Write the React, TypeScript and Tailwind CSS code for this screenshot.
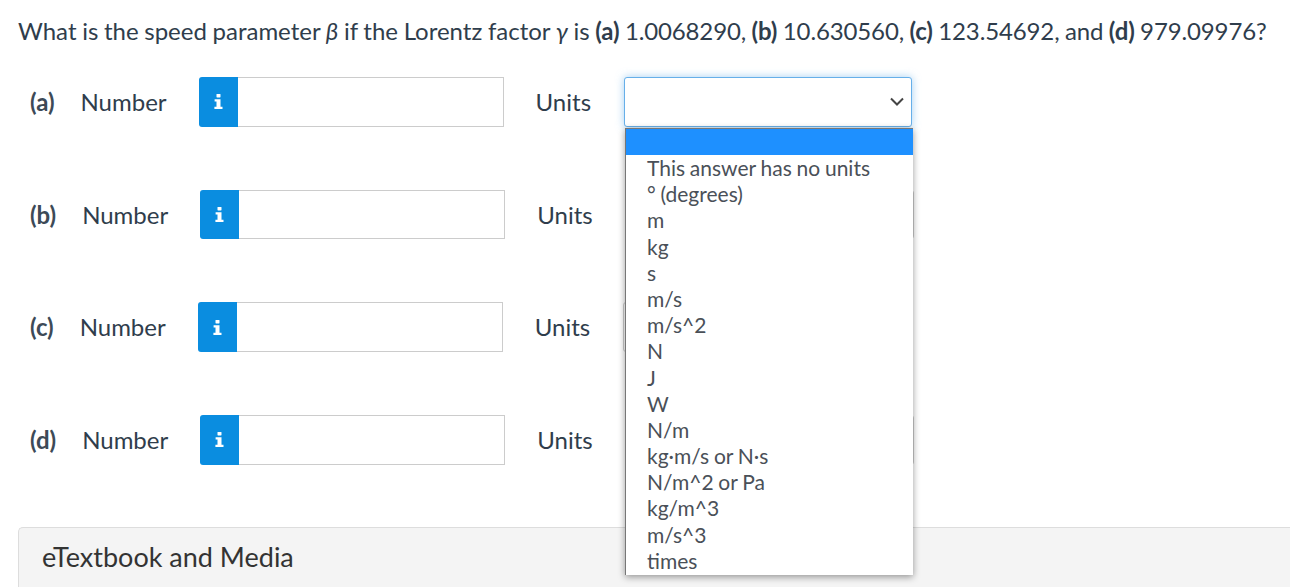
import React from 'react'

const rows = [
  { label: '(a)', focused: true },
  { label: '(b)', focused: false },
  { label: '(c)', focused: false },
  { label: '(d)', focused: false },
]

const units = [
  'This answer has no units',
  '° (degrees)',
  'm',
  'kg',
  's',
  'm/s',
  'm/s^2',
  'N',
  'J',
  'W',
  'N/m',
  'kg·m/s or N·s',
  'N/m^2 or Pa',
  'kg/m^3',
  'm/s^3',
  'times',
]

const InfoIcon = () => (
  <svg width="9" height="15" viewBox="0 0 9 15" fill="#fff">
    <rect x="2.5" y="0" width="4" height="3.4" rx="0.6" />
    <path d="M0.6 5.2h5.9v7.6h2v2.2H0.4v-2.2h2.1V7.4H0.6z" />
  </svg>
)

const Row = ({ label, focused }: { label: string; focused: boolean }) => (
  <div className="flex h-[49.7px] items-center mb-[63px]">
    <span className="font-bold text-[#3d4a57]">{label}</span>
    <span className="ml-[26px] text-[#2f3d4c]">Number</span>
    <div className="ml-[32px] flex h-full w-[305px]">
      <div className="flex w-[39px] shrink-0 items-center justify-center rounded-l-[3px] bg-[#0a8de0]">
        <InfoIcon />
      </div>
      <input className="min-w-0 flex-1 border border-l-0 border-[#cccccc] bg-white" />
    </div>
    <span className="ml-[32px] text-[#2f3d4c]">Units</span>
    <div
      className={
        focused
          ? 'ml-[33px] flex h-full w-[288px] items-center justify-end rounded-[3px] border border-[#66afe9] bg-white pr-[7px] shadow-[0_0_8px_rgba(102,175,233,0.6)]'
          : 'ml-[33px] flex h-full w-[288px] items-center justify-end rounded-[3px] border border-[#cccccc] bg-white pr-[7px]'
      }
    >
      <svg width="14" height="9" viewBox="0 0 14 9" fill="none" stroke="#444" strokeWidth="2">
        <path d="M1 1.5l6 6 6-6" />
      </svg>
    </div>
  </div>
)

export default function App() {
  return (
    <div className="relative h-[587px] w-[1290px] overflow-hidden bg-white font-['Lato','Open_Sans',sans-serif] text-[24px] text-[#2f3d4c]">
      <div className="pl-[18px] pt-[14px]">
        <p className="mb-[29px] h-[34px] whitespace-nowrap leading-[34px] text-[#2f3d4c] [word-spacing:-0.5px]">
          What is the speed parameter <i>β</i> if the Lorentz factor <i>γ</i> is{' '}
          <span className="tracking-[-0.13px]">
            <b>(a)</b> 1.0068290, <b>(b)</b> 10.630560, <b>(c)</b> 123.54692, and <b>(d)</b> 979.09976?
          </span>
        </p>
        <div className="pl-[12px]">
          {rows.map((r) => (
            <Row key={r.label} label={r.label} focused={r.focused} />
          ))}
        </div>
        <div className="-mt-[1px] h-[70px] rounded-tl-[5px] border border-r-0 border-[#dddddd] bg-[#f4f4f4] pl-[23px] pt-[11px] text-[27px] leading-[36px] text-[#333333]">
          eTextbook and Media
        </div>
      </div>

      {/* open select menu */}
      <div className="absolute left-[625px] top-[128px] h-[447px] w-[288px] overflow-hidden border-l border-t border-[#777777] bg-white text-[21px] leading-[26.2px] text-[#4a5058] shadow-[0_2px_7px_rgba(0,0,0,0.4)] [word-spacing:-0.6px]">
        <div className="h-[26px] bg-[#1e90ff]" />
        {units.map((u) => (
          <div key={u} className="h-[26.2px] pl-[21px] whitespace-nowrap">
            {u}
          </div>
        ))}
      </div>
    </div>
  )
}
